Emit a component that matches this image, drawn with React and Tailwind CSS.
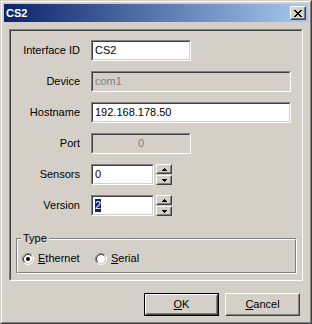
const font = { fontFamily: '"Liberation Sans", Arial, sans-serif' };

// 2px sunken edge (edit boxes, main panel)
const Sunken = ({ className = "", inner = "", children }) => (
  <div className={`border border-t-[#808080] border-l-[#808080] border-b-white border-r-white ${className}`}>
    <div className={`h-full w-full border border-t-[#404040] border-l-[#404040] border-b-[#d4d0c8] border-r-[#d4d0c8] ${inner}`}>
      {children}
    </div>
  </div>
);

// 2px raised edge (buttons)
const Raised = ({ className = "", inner = "", children }) => (
  <div className={`border border-t-white border-l-white border-b-[#404040] border-r-[#404040] bg-[#d4d0c8] ${className}`}>
    <div className={`h-full w-full border border-t-[#d4d0c8] border-l-[#d4d0c8] border-b-[#808080] border-r-[#808080] ${inner}`}>
      {children}
    </div>
  </div>
);

const Arrow = ({ down }) => (
  <svg width="5" height="3" viewBox="0 0 5 3" shapeRendering="crispEdges">
    <polygon points={down ? "0,0 5,0 2.5,3" : "0,3 5,3 2.5,0"} fill="#000" />
  </svg>
);

const Spin = () => (
  <div className="ml-[2px] flex flex-col gap-[1px]">
    <Raised className="w-[16px] h-[10px]" inner="flex items-center justify-center">
      <Arrow />
    </Raised>
    <Raised className="w-[16px] h-[10px]" inner="flex items-center justify-center">
      <Arrow down />
    </Raised>
  </div>
);

const Radio = ({ checked }) => (
  <svg width="12" height="12" viewBox="0 0 12 12">
    <circle cx="6" cy="6" r="4" fill="#fff" />
    <path d="M2.11 9.89A5.5 5.5 0 0 1 9.89 2.11" fill="none" stroke="#808080" />
    <path d="M9.89 2.11A5.5 5.5 0 0 1 2.11 9.89" fill="none" stroke="#fff" />
    <path d="M2.82 9.18A4.5 4.5 0 0 1 9.18 2.82" fill="none" stroke="#404040" />
    <path d="M9.18 2.82A4.5 4.5 0 0 1 2.82 9.18" fill="none" stroke="#d4d0c8" />
    {checked && <circle cx="6" cy="6" r="2" fill="#000" />}
  </svg>
);

const Row = ({ label, children }) => (
  <div className="flex h-[21px] items-center">
    <div className="mr-[11px] w-[69px] text-right">{label}</div>
    {children}
  </div>
);

const Edit = ({ w, disabled, center, children }) => (
  <Sunken
    className={`${w} h-[21px]`}
    inner={`flex items-center px-[2px] ${disabled ? "bg-[#d4d0c8] text-[#808080]" : "bg-white"} ${center ? "justify-center" : ""}`}
  >
    {children}
  </Sunken>
);

export default function App() {
  return (
    <div
      className="w-[312px] h-[324px] flex border border-t-[#d4d0c8] border-l-[#d4d0c8] border-b-[#404040] border-r-[#404040] text-[11px] leading-[13px] text-black select-none"
      style={font}
    >
      <div className="flex flex-1 flex-col border border-t-white border-l-white border-b-[#808080] border-r-[#808080] bg-[#d4d0c8] p-[2px]">
        {/* Title bar */}
        <div className="flex h-[18px] items-center justify-between bg-[linear-gradient(to_right,#0a246a,#a6caf0)] pl-[2px] pr-[2px]">
          <span className="font-bold text-white">CS2</span>
          <Raised className="w-[16px] h-[14px]" inner="flex items-center justify-center">
            <svg width="8" height="7" viewBox="0 0 8 7" shapeRendering="crispEdges">
              <path d="M0 0h2v1H0zM6 0h2v1H6zM1 1h2v1H1zM5 1h2v1H5zM2 2h4v1H2zM3 3h2v1H3zM2 4h4v1H2zM1 5h2v1H1zM5 5h2v1H5zM0 6h2v1H0zM6 6h2v1H6z" fill="#000" />
            </svg>
          </Raised>
        </div>

        {/* Main panel */}
        <Sunken className="mt-[7px] mx-[5px] h-[252px]">
          <div className="flex flex-col gap-[10px] pt-[9px]">
            <Row label="Interface ID">
              <Edit w="w-[100px]">CS2</Edit>
            </Row>
            <Row label="Device">
              <Edit w="w-[200px]" disabled>com1</Edit>
            </Row>
            <Row label="Hostname">
              <Edit w="w-[200px]">192.168.178.50</Edit>
            </Row>
            <Row label="Port">
              <Edit w="w-[100px]" disabled center>0</Edit>
            </Row>
            <Row label="Sensors">
              <Edit w="w-[63px]">0</Edit>
              <Spin />
            </Row>
            <Row label="Version">
              <Edit w="w-[63px]">
                <span className="bg-[#0a246a] text-white">2</span>
              </Edit>
              <Spin />
            </Row>
          </div>

          {/* Type group */}
          <div className="relative mt-[22px] ml-[5px] w-[281px] h-[36px] border border-t-[#808080] border-l-[#808080] border-b-white border-r-white">
            <div className="h-full w-full border border-t-white border-l-white border-b-[#808080] border-r-[#808080]">
              <div className="flex items-center pt-[12px] pl-[4px]">
                <div className="flex w-[73px] items-center">
                  <Radio checked />
                  <span className="ml-[4px]"><span className="underline">E</span>thernet</span>
                </div>
                <div className="flex items-center">
                  <Radio />
                  <span className="ml-[4px]"><span className="underline">S</span>erial</span>
                </div>
              </div>
            </div>
            <span className="absolute -top-[7px] left-[4px] bg-[#d4d0c8] px-[2px]">Type</span>
          </div>
        </Sunken>

        {/* Buttons */}
        <div className="mt-[12px] flex justify-end gap-[6px] pr-[8px]">
          <div className="w-[75px] h-[23px] border border-black">
            <Raised className="h-full w-full" inner="flex items-center justify-center">
              <span><span className="underline">O</span>K</span>
            </Raised>
          </div>
          <Raised className="w-[75px] h-[23px]" inner="flex items-center justify-center">
            <span><span className="underline">C</span>ancel</span>
          </Raised>
        </div>
      </div>
    </div>
  );
}
